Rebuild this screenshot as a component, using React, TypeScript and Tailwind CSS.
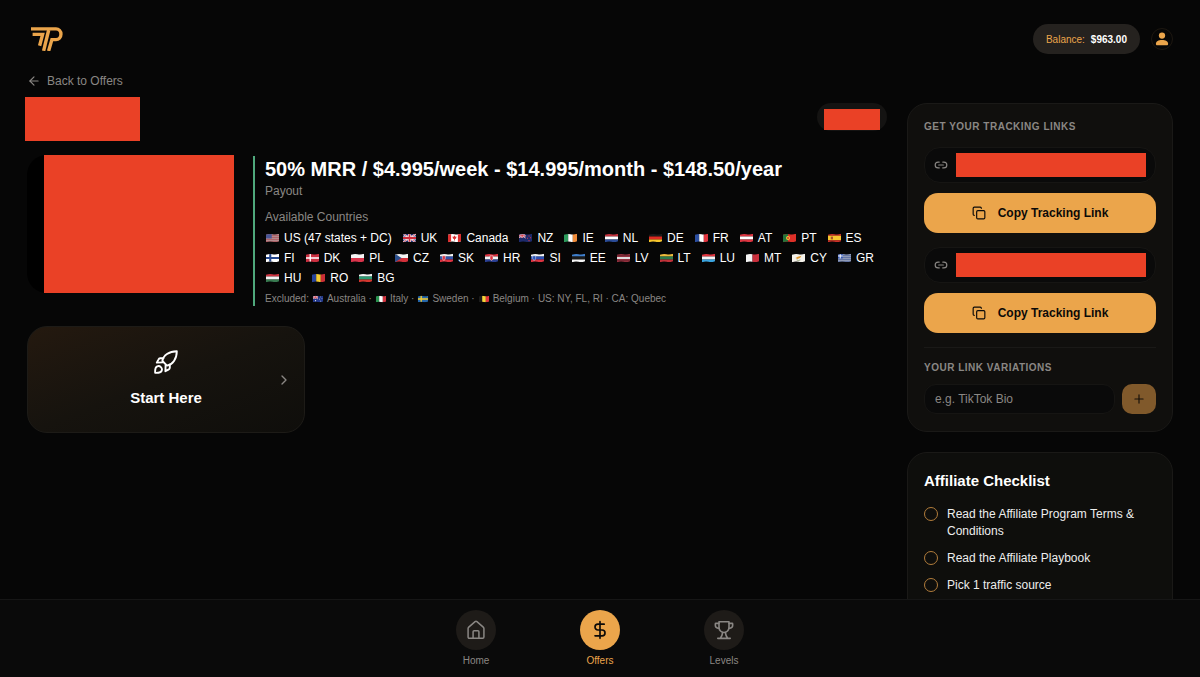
import { useId, type ReactNode } from 'react'
import { ArrowLeft, ChevronRight, Copy, DollarSign, Link2, Plus } from 'lucide-react'

// Flags are described as stripes plus an optional emblem on an 18x12 field
type FlagSpec = { dir?: 'h' | 'v'; stripes: string[]; emblem?: ReactNode }

const unionJack = (w: number, h: number) => (
  <>
    <rect width={w} height={h} fill="#24337e" />
    <path d={`M0 0L${w} ${h}M${w} 0L0 ${h}`} stroke="#fff" strokeWidth={h / 5} />
    <path d={`M0 0L${w} ${h}M${w} 0L0 ${h}`} stroke="#cf2b3a" strokeWidth={h / 12} />
    <path d={`M0 ${h / 2}H${w}M${w / 2} 0V${h}`} stroke="#fff" strokeWidth={h / 3} />
    <path d={`M0 ${h / 2}H${w}M${w / 2} 0V${h}`} stroke="#cf2b3a" strokeWidth={h / 5} />
  </>
)

const cross = (color: string, width: number) => (
  <path d="M0 6H18M6 0V12" stroke={color} strokeWidth={width} />
)

const shield = (color: string, x = 5.5) => (
  <path d={`M${x - 2} 3H${x + 2}V6.5Q${x + 2} 8.5 ${x} 9.3Q${x - 2} 8.5 ${x - 2} 6.5Z`} fill={color} stroke="#fff" strokeWidth=".6" />
)

const FLAGS: Record<string, FlagSpec> = {
  US: {
    stripes: ['#d23b46', '#eee', '#d23b46', '#eee', '#d23b46', '#eee', '#d23b46', '#eee', '#d23b46'],
    emblem: <rect width="8" height="6.6" fill="#4a5796" />,
  },
  UK: { stripes: ['#24337e'], emblem: unionJack(18, 12) },
  CA: {
    stripes: ['#fff'],
    emblem: (
      <>
        <path d="M0 0H4.5V12H0ZM13.5 0H18V12H13.5Z" fill="#dc2f2f" />
        <path d="M9 2.4L10 4.2L11.7 4L11.2 6.2L9.6 7.8L9.3 9.6H8.7L8.4 7.8L6.8 6.2L6.3 4L8 4.2Z" fill="#dc2f2f" />
      </>
    ),
  },
  NZ: {
    stripes: ['#1d2a6b'],
    emblem: (
      <>
        {unionJack(9, 6)}
        <path d="M13 2.5h1.4v1.4H13zM11 5.5h1.4v1.4H11zM15 5h1.4v1.4H15zM13 8.8h1.4v1.4H13z" fill="#d4344a" />
      </>
    ),
  },
  AU: {
    stripes: ['#22388c'],
    emblem: (
      <>
        {unionJack(9, 6)}
        <path d="M4 8h1.8v1.8H4zM13 2h1.2v1.2H13zM11 5.5h1.2v1.2H11zM15 5h1.2v1.2H15zM13 9h1.2v1.2H13z" fill="#fff" />
      </>
    ),
  },
  IE: { dir: 'v', stripes: ['#2c9a5b', '#fff', '#ee8b3a'] },
  NL: { stripes: ['#c0303b', '#fff', '#2a4b96'] },
  DE: { stripes: ['#1b1b1b', '#dd2a22', '#f5c52c'] },
  FR: { dir: 'v', stripes: ['#2b4ea0', '#fff', '#e0353f'] },
  AT: { stripes: ['#dc3440', '#fff', '#dc3440'] },
  PT: {
    stripes: ['#dd3028'],
    emblem: (
      <>
        <rect width="7" height="12" fill="#23733a" />
        <circle cx="7" cy="6" r="2.6" fill="#f0cc3e" />
        <circle cx="7" cy="6" r="1.3" fill="#dd3028" />
      </>
    ),
  },
  ES: {
    stripes: ['#cb2f28', '#f5c62f', '#f5c62f', '#cb2f28'],
    emblem: <rect x="4" y="4.2" width="3" height="3.6" fill="#a8542c" />,
  },
  FI: { stripes: ['#fff'], emblem: cross('#26488e', 2.8) },
  DK: { stripes: ['#cb2f40'], emblem: cross('#fff', 1.8) },
  PL: { stripes: ['#f4f4f4', '#d9344b'] },
  CZ: { stripes: ['#f4f4f4', '#d2303a'], emblem: <path d="M0 0L9 6L0 12Z" fill="#2b4f8c" /> },
  SK: { stripes: ['#f4f4f4', '#2f53a8', '#dc3340'], emblem: shield('#dc3340') },
  HR: { stripes: ['#dc3340', '#f4f4f4', '#2a3f93'], emblem: shield('#dc3340', 9) },
  SI: { stripes: ['#f4f4f4', '#2a50b4', '#dc3340'], emblem: shield('#2a50b4', 4.5) },
  EE: { stripes: ['#3f7fcc', '#1b1b1b', '#f4f4f4'] },
  LV: { stripes: ['#93303e', '#93303e', '#f4f4f4', '#93303e', '#93303e'] },
  LT: { stripes: ['#eebb3c', '#2c7a4c', '#c03139'] },
  LU: { stripes: ['#e0353f', '#f4f4f4', '#3aa3dd'] },
  MT: { dir: 'v', stripes: ['#f4f4f4', '#c92f3c'] },
  CY: {
    stripes: ['#f4f1ea'],
    emblem: (
      <>
        <path d="M5 6L8 4.4L13 3L11 6L7.5 7.2Z" fill="#de9832" />
        <path d="M6.5 8.6Q9 10 11.5 8.6" stroke="#61743a" strokeWidth=".8" fill="none" />
      </>
    ),
  },
  GR: {
    stripes: ['#3458b4', '#fff', '#3458b4', '#fff', '#3458b4', '#fff', '#3458b4', '#fff', '#3458b4'],
    emblem: (
      <>
        <rect width="6.6" height="6.6" fill="#3458b4" />
        <path d="M0 3.3H6.6M3.3 0V6.6" stroke="#fff" strokeWidth="1.3" />
      </>
    ),
  },
  HU: { stripes: ['#cd3340', '#f4f4f4', '#387a50'] },
  RO: { dir: 'v', stripes: ['#27439a', '#f5cc30', '#cb2f36'] },
  BG: { stripes: ['#f4f4f4', '#2c9a72', '#d3362f'] },
  IT: { dir: 'v', stripes: ['#2a9450', '#fff', '#d2343f'] },
  SE: { stripes: ['#2566a8'], emblem: cross('#f5cc30', 2.2) },
  BE: { dir: 'v', stripes: ['#1b1b1b', '#f5d33a', '#e2353c'] },
}

function Flag({ code, className }: { code: string; className: string }) {
  const id = useId()
  const { dir = 'h', stripes, emblem } = FLAGS[code]
  const w = 18 / stripes.length
  const h = 12 / stripes.length
  return (
    <svg viewBox="-1 0 20 12" className={className} aria-hidden="true">
      <clipPath id={id}>
        <path d="M.3 1.8Q5 -.2 9 1T17.7 .4V10.2Q13 12.2 9 11T.3 11.6Z" />
      </clipPath>
      <g clipPath={`url(#${id})`}>
        {stripes.map((c, i) =>
          dir === 'v'
            ? <rect key={i} x={i * w} width={w + 0.1} height="12" fill={c} />
            : <rect key={i} y={i * h} width="18" height={h + 0.1} fill={c} />,
        )}
        {emblem}
      </g>
    </svg>
  )
}

const COUNTRIES = [
  ['US', 'US (47 states + DC)'], ['UK', 'UK'], ['CA', 'Canada'], ['NZ', 'NZ'], ['IE', 'IE'],
  ['NL', 'NL'], ['DE', 'DE'], ['FR', 'FR'], ['AT', 'AT'], ['PT', 'PT'], ['ES', 'ES'],
  ['FI', 'FI'], ['DK', 'DK'], ['PL', 'PL'], ['CZ', 'CZ'], ['SK', 'SK'], ['HR', 'HR'],
  ['SI', 'SI'], ['EE', 'EE'], ['LV', 'LV'], ['LT', 'LT'], ['LU', 'LU'], ['MT', 'MT'],
  ['CY', 'CY'], ['GR', 'GR'], ['HU', 'HU'], ['RO', 'RO'], ['BG', 'BG'],
]

const EXCLUDED = [['AU', 'Australia'], ['IT', 'Italy'], ['SE', 'Sweden'], ['BE', 'Belgium']]

const CHECKLIST = [
  'Read the Affiliate Program Terms & Conditions',
  'Read the Affiliate Playbook',
  'Pick 1 traffic source',
]

function Logo() {
  return (
    <svg viewBox="0 0 32 24" className="h-6 w-8" fill="none" stroke="#eba54b" strokeWidth="3.4" aria-hidden="true">
      <path d="M0 1.9H25A4.9 5.3 0 0 1 25 12.6H20.9L17.6 24" />
      <path d="M1.6 7.4H11.6L8.6 18.8" />
      <path d="M17.7 3L12.6 23.8" />
    </svg>
  )
}

function PersonIcon() {
  return (
    <svg viewBox="0 0 24 24" className="size-3.5" fill="#eba54b" aria-hidden="true">
      <circle cx="12" cy="6.2" r="5.4" />
      <path d="M1.5 20.5C1.5 15.9 6 13.6 12 13.6S22.5 15.9 22.5 20.5C22.5 22 21.6 22.8 20.2 22.8H3.8C2.4 22.8 1.5 22 1.5 20.5Z" />
    </svg>
  )
}

function RocketIcon() {
  return (
    <svg viewBox="0 0 24 24" className="size-6" fill="none" stroke="white" strokeWidth="1.9" strokeLinecap="round" strokeLinejoin="round" aria-hidden="true">
      <path d="M8.4 11C9.2 5.4 15 1.2 22.8 1.2C22.8 9 18.6 14.8 13 15.6Z" />
      <path d="M9.4 8.2H6.2Q5 8.4 4.4 9.6L2.8 12.6L8.8 12.4" />
      <path d="M15.8 14.6V17.8Q15.6 19 14.4 19.6L11.4 21.2L11.6 15.2" />
      <path d="M1.2 22.8C.9 19.4 1.2 17.2 3.2 16.3C5.9 15.2 8.8 18 7.7 20.7C6.7 22.6 4.2 23 1.2 22.8Z" />
    </svg>
  )
}

function HomeIcon() {
  return (
    <svg viewBox="0 0 24 24" className="size-5" fill="none" stroke="currentColor" strokeWidth="1.8" strokeLinejoin="round" aria-hidden="true">
      <path d="M2.5 10.2Q2.5 9.2 3.3 8.5L10.9 2Q12 1.2 13.1 2L20.7 8.5Q21.5 9.2 21.5 10.2V20.5Q21.5 22 20 22H4Q2.5 22 2.5 20.5Z" />
      <path d="M8.5 22V14Q8.5 12.8 9.7 12.8H14.3Q15.5 12.8 15.5 14V22" />
    </svg>
  )
}

function TrophyIcon() {
  return (
    <svg viewBox="0 0 24 24" className="size-5" fill="none" stroke="currentColor" strokeWidth="1.9" strokeLinecap="round" strokeLinejoin="round" aria-hidden="true">
      <path d="M6 2H18V9A6 6 0 0 1 6 9Z" />
      <path d="M6 4H2.2Q1.6 4 1.6 4.8V6.4Q1.6 9.4 4.8 9.8L6.2 10M18 4H21.8Q22.4 4 22.4 4.8V6.4Q22.4 9.4 19.2 9.8L17.8 10" />
      <path d="M10.4 14.8Q10.2 18 7.5 22M13.6 14.8Q13.8 18 16.5 22M4.5 22H19.5" />
    </svg>
  )
}

function TrackingLink() {
  return (
    <div>
      <div className="flex h-9 items-center gap-2 rounded-2xl border border-[#161513] bg-[#0a0a0a] px-[9px]">
        <Link2 className="size-3.5 shrink-0 text-[#8a8784]" strokeWidth={2} />
        <div className="h-6 flex-1 bg-[#ea4126]" />
      </div>
      <button className="mt-2.5 flex h-10 w-full items-center justify-center gap-3 rounded-[14px] bg-[#eba54b] text-[12px] font-bold text-[#0c0a08]">
        <Copy className="size-3.5" strokeWidth={2} />
        Copy Tracking Link
      </button>
    </div>
  )
}

const NAV = [
  { label: 'Home', icon: <HomeIcon />, active: false },
  { label: 'Offers', icon: <DollarSign className="size-5" strokeWidth={2} />, active: true },
  { label: 'Levels', icon: <TrophyIcon />, active: false },
]

export default function App() {
  return (
    <div className="flex h-screen flex-col bg-[#060606] font-['Liberation_Sans',Arial,sans-serif] text-[12px] text-white">
      <div className="min-h-0 flex-1 overflow-y-auto px-[27px] [scrollbar-width:none]">
        {/* Header */}
        <header className="flex items-center justify-between pt-6">
          <a href="#" aria-label="Dashboard" className="ml-1"><Logo /></a>
          <div className="flex items-center gap-[11px]">
            <div className="flex h-[30px] items-center gap-1.5 rounded-full bg-[#25221f] px-[13px] text-[10px]">
              <span className="text-[#eba54b]">Balance:</span>
              <span className="font-bold">$963.00</span>
            </div>
            <button aria-label="Account" className="flex size-[22px] items-center justify-center rounded-full border border-[#1d1710]">
              <PersonIcon />
            </button>
          </div>
        </header>

        <a href="#" className="mt-[19px] flex h-4 w-fit items-center gap-1.5 text-[#8a8784]">
          <ArrowLeft className="size-3.5" strokeWidth={2} />
          Back to Offers
        </a>

        <div className="mt-2 flex items-start gap-5">
          <main className="min-w-0 flex-1">
            <div className="flex items-start justify-between">
              <div className="-ml-0.5 h-11 w-[115px] bg-[#ea4126]" />
              <div className="mt-1.5 flex h-7 w-[70px] items-center justify-center rounded-full bg-[#141312]">
                <div className="mt-1 h-[21px] w-14 bg-[#ea4126]" />
              </div>
            </div>

            <section className="mt-3.5 flex items-start">
              <div className="h-[138px] w-[207px] shrink-0 rounded-[20px] bg-black pl-[17px]">
                <div className="h-full bg-[#ea4126]" />
              </div>
              <div className="ml-[19px] mt-px min-w-0 flex-1 border-l-2 border-[#4fa87c] pl-[10px]">
                <h1 className="text-[20px] font-bold leading-[26px]">
                  50% MRR / $4.995/week - $14.995/month - $148.50/year
                </h1>
                <p className="leading-[18px] text-[#8a8784]">Payout</p>
                <p className="mt-2 leading-[18px] text-[#8a8784]">Available Countries</p>
                <ul className="mt-0.5 flex flex-wrap gap-x-[10px] leading-5">
                  {COUNTRIES.map(([code, name]) => (
                    <li key={code} className="flex items-center gap-1">
                      <Flag code={code} className="h-2.5 w-[15px]" />
                      {name}
                    </li>
                  ))}
                </ul>
                <p className="mt-1 flex items-center gap-[3px] text-[10px] leading-[14px] text-[#8a8784]">
                  Excluded:
                  {EXCLUDED.map(([code, name]) => (
                    <span key={code} className="flex items-center gap-[3px]">
                      <Flag code={code} className="h-2 w-3" />
                      {name} ·
                    </span>
                  ))}
                  US: NY, FL, RI · CA: Quebec
                </p>
              </div>
            </section>

            <button className="mt-5 grid h-[107px] w-[278px] grid-cols-[1fr_auto_1fr] items-center rounded-[20px] border border-[#1d1b17] bg-linear-to-br from-[#24190f] via-[#16130e] to-[#0f0e0b] px-3">
              <span className="col-start-2 flex flex-col items-center gap-3.5 pb-0.5 text-[15px] font-bold leading-5">
                <RocketIcon />
                Start Here
              </span>
              <ChevronRight className="size-4 justify-self-end text-[#8a8784]" strokeWidth={2} />
            </button>
          </main>

          {/* Sidebar */}
          <aside className="mt-1.5 flex w-[266px] shrink-0 flex-col gap-5">
            <section className="rounded-[20px] border border-[#1a1917] bg-[#100f0d] px-4 pb-[17px] pt-[15px]">
              <h2 className="text-[10px] font-bold uppercase leading-4 tracking-wider text-[#8a8784]">
                Get your tracking links
              </h2>
              <div className="mt-3 flex flex-col gap-3.5">
                <TrackingLink />
                <TrackingLink />
              </div>
              <div className="mt-3.5 border-t border-[#1a1917] pt-3">
                <label htmlFor="variation" className="block text-[10px] font-bold uppercase leading-4 tracking-wider text-[#8a8784]">
                  Your link variations
                </label>
                <div className="mt-2 flex gap-[7px]">
                  <input
                    id="variation"
                    placeholder="e.g. TikTok Bio"
                    className="h-[30px] min-w-0 flex-1 rounded-xl border border-[#161513] bg-[#0a0a0a] px-2.5 placeholder:text-[#8a8784]"
                  />
                  <button aria-label="Add variation" className="flex h-[30px] w-[34px] items-center justify-center rounded-[10px] bg-[#80592b] text-[#15100a]">
                    <Plus className="size-3.5" strokeWidth={2} />
                  </button>
                </div>
              </div>
            </section>

            <section className="rounded-[20px] border border-[#1a1917] bg-[#0e0e0c] px-4 pb-10 pt-4">
              <h2 className="mt-0.5 text-[15px] font-bold leading-5">Affiliate Checklist</h2>
              <ul className="mt-[15px] flex flex-col gap-2.5 leading-[17px] text-[#ededed]">
                {CHECKLIST.map((item) => (
                  <li key={item}>
                    <label className="flex items-start gap-[9px]">
                      <input type="checkbox" className="mt-px size-3.5 shrink-0 appearance-none rounded-full border border-[#b17c3b] checked:bg-[#eba54b]" />
                      {item}
                    </label>
                  </li>
                ))}
              </ul>
            </section>
          </aside>
        </div>
      </div>

      {/* Bottom nav */}
      <nav className="flex shrink-0 justify-center gap-[84px] border-t border-[#161616] bg-[#0a0a0a] pb-2 pt-2.5">
        {NAV.map(({ label, icon, active }) => (
          <a
            key={label}
            href="#"
            className={`flex w-10 flex-col items-center gap-[3px] text-[10px] leading-4 ${active ? 'text-[#eba54b]' : 'text-[#8a8784]'}`}
          >
            <span className={`flex size-10 items-center justify-center rounded-full ${active ? 'bg-[#eba54b] text-[#0c0a08]' : 'bg-[#1e1b18]'}`}>
              {icon}
            </span>
            {label}
          </a>
        ))}
      </nav>
    </div>
  )
}
